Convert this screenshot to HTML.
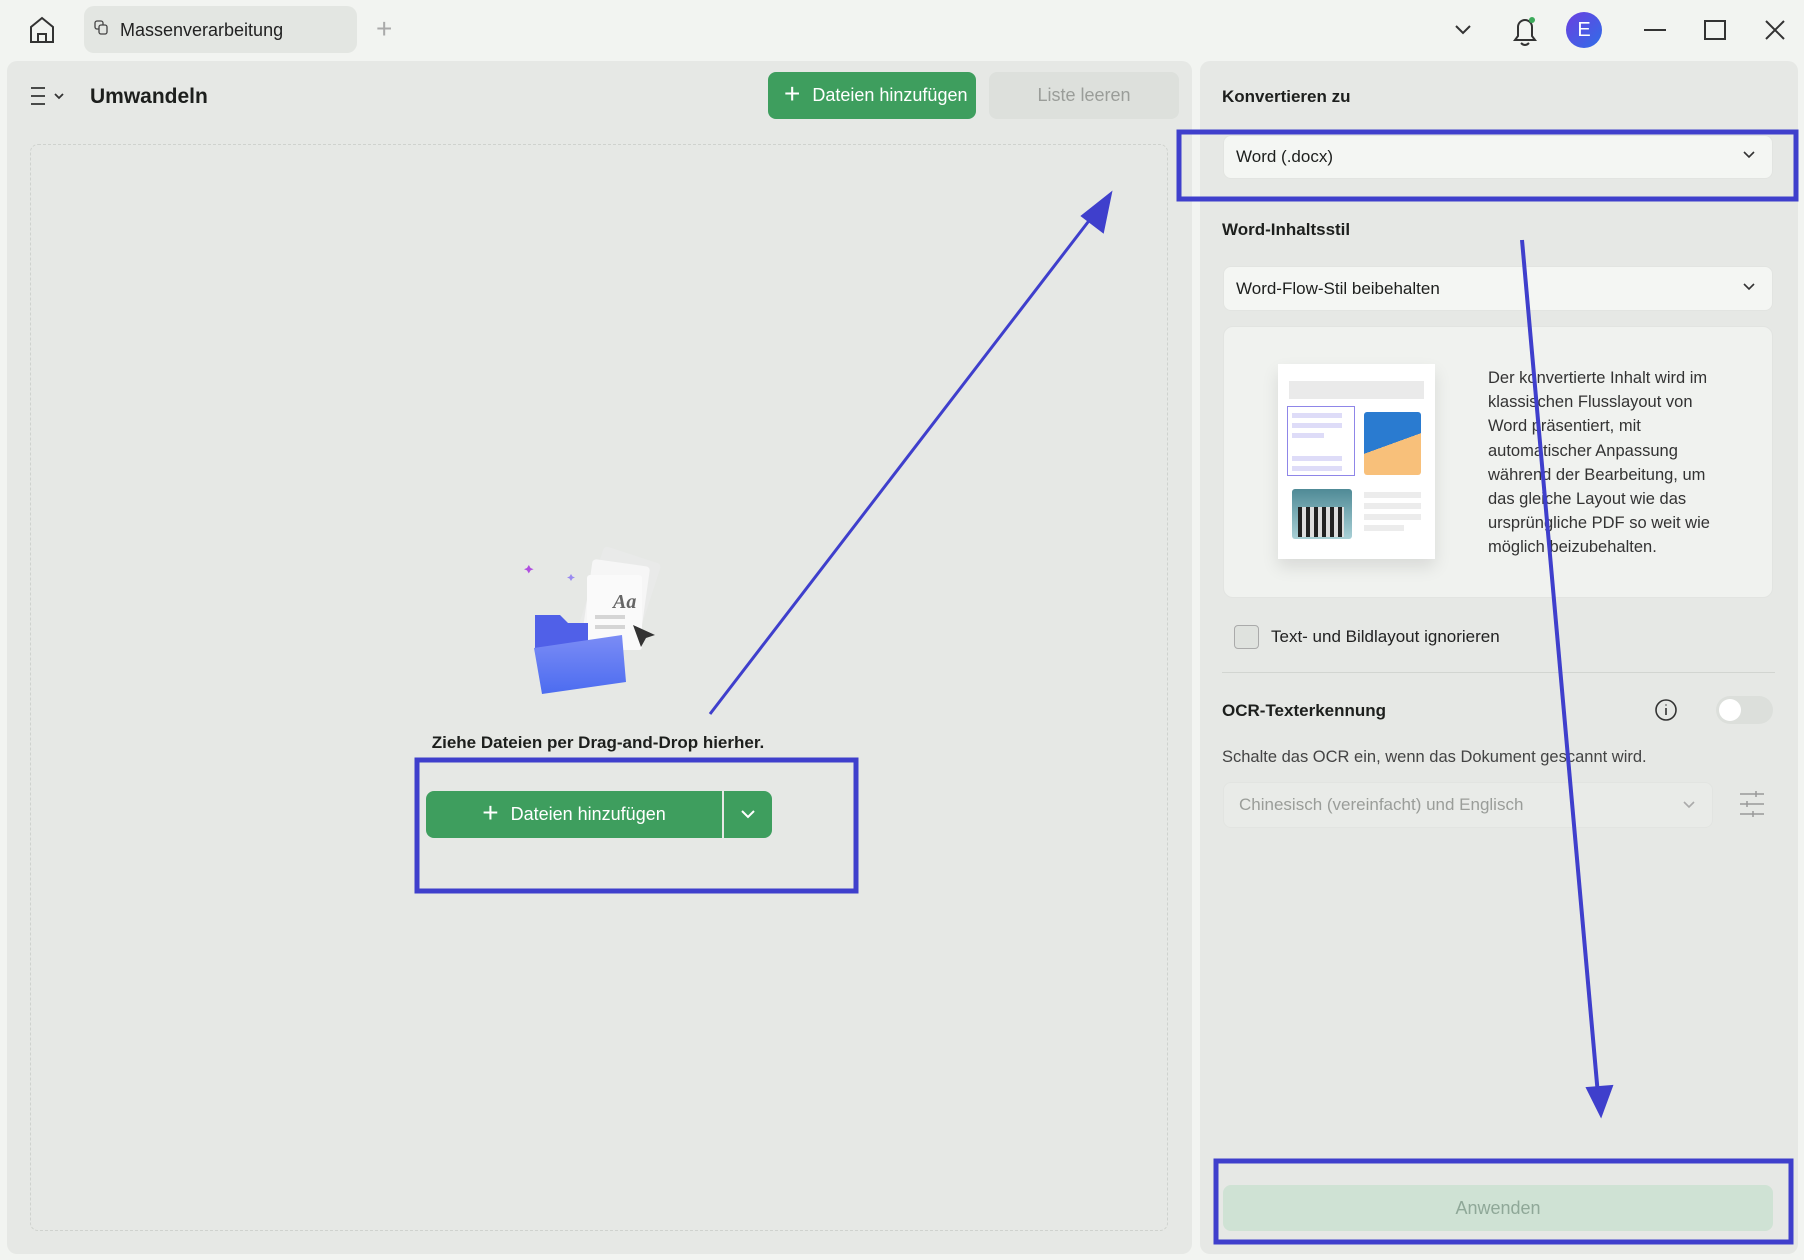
<!DOCTYPE html>
<html><head><meta charset="utf-8"><style>
*{box-sizing:border-box;margin:0;padding:0}
body{width:1804px;height:1260px;background:#f2f4f1;font-family:"Liberation Sans",sans-serif;position:relative;overflow:hidden;color:#1d1f1d}
.a{position:absolute}
.panel{background:#e6e8e5;border-radius:10px}
.sel{background:#f4f6f3;border-radius:8px;border:1px solid #e2e4e1;font-size:17px;padding-left:12px;display:flex;align-items:center}
.h{font-weight:bold;font-size:17px}
</style></head><body>
<svg class="a" style="left:27px;top:15px" width="30" height="30" viewBox="0 0 30 30" fill="none" stroke="#333" stroke-width="2"><path d="M4 27V12L15 3l11 9v15z"/><path d="M11 27v-8h8v8"/></svg>
<div class="a" style="left:84px;top:6px;width:273px;height:47px;background:#e3e6e2;border-radius:10px"></div>
<svg class="a" style="left:94px;top:20px" width="16" height="16" viewBox="0 0 16 16" fill="none" stroke="#444" stroke-width="1.3"><rect x="1" y="1" width="8" height="8" rx="2"/><rect x="5" y="5" width="8" height="9" rx="2" fill="#e3e6e2"/></svg>
<div class="a" style="left:120px;top:20px;font-size:18px;color:#222">Massenverarbeitung</div>
<div class="a" style="left:376px;top:13px;font-size:28px;color:#aaa;font-weight:300">+</div>
<svg class="a" style="left:1453px;top:22px" width="20" height="14"><path d="M3 4l7 7 7-7" fill="none" stroke="#333" stroke-width="2"/></svg>
<svg class="a" style="left:1510px;top:14px" width="30" height="34" fill="none" stroke="#333" stroke-width="2"><path d="M5 26h20l-3-4V13a7 7 0 0 0-14 0v9z"/><path d="M11 29q4 4 8 0"/><circle cx="22" cy="6" r="3" fill="#3caa5a" stroke="none"/></svg>
<div class="a" style="left:1566px;top:12px;width:36px;height:36px;border-radius:50%;background:linear-gradient(135deg,#6b3fe0,#2f6ee8);color:#fff;font-size:20px;text-align:center;line-height:36px">E</div>
<div class="a" style="left:1644px;top:29px;width:22px;height:2px;background:#333"></div>
<div class="a" style="left:1704px;top:20px;width:22px;height:20px;border:2px solid #333"></div>
<svg class="a" style="left:1764px;top:19px" width="22" height="22"><path d="M2 2l18 18M20 2L2 20" stroke="#333" stroke-width="2"/></svg>

<div class="a panel" style="left:7px;top:61px;width:1185px;height:1193px"></div>
<svg class="a" style="left:30px;top:86px" width="40" height="20" fill="none" stroke="#333" stroke-width="1.8"><path d="M1 2h14M1 10h14M1 18h14"/><path d="M25 8l4 4 4-4"/></svg>
<div class="a" style="left:90px;top:85px;font-size:21px;font-weight:bold">Umwandeln</div>
<div class="a" style="left:768px;top:72px;width:208px;height:47px;background:#3e9e5e;border-radius:8px;color:#fff;font-size:18px;display:flex;align-items:center;padding-left:16px"><span style="font-size:28px;font-weight:300;margin-right:12px;margin-top:-4px">+</span>Dateien hinzufügen</div>
<div class="a" style="left:989px;top:72px;width:190px;height:47px;background:#dde0dc;border-radius:8px;color:#9a9d99;font-size:18px;text-align:center;line-height:47px">Liste leeren</div>
<div class="a" style="left:30px;top:144px;width:1138px;height:1087px;border:1.5px dashed #cfd2ce;border-radius:8px"></div>
<svg class="a" style="left:520px;top:545px" width="165" height="150" viewBox="0 0 165 150">
<path d="M8 0l3 5 5 2-5 2-3 5-3-5-5-2 5-2z" transform="translate(4,20) scale(.6)" fill="#b04fe0"/>
<path d="M8 0l3 5 5 2-5 2-3 5-3-5-5-2 5-2z" transform="translate(47,29) scale(.5)" fill="#9a8af0"/>
<rect x="70" y="8" width="60" height="85" rx="4" fill="#e9eae9" transform="rotate(18 100 50)"/>
<rect x="68" y="18" width="58" height="80" rx="4" fill="#f6f6f6" transform="rotate(8 100 50)"/>
<rect x="67" y="30" width="55" height="75" rx="3" fill="#fafafa"/>
<text x="93" y="63" font-size="20" font-style="italic" font-weight="bold" fill="#666" font-family="Liberation Serif">Aa</text>
<rect x="75" y="70" width="30" height="4" fill="#d5d5d5"/><rect x="75" y="80" width="30" height="4" fill="#d5d5d5"/>
<path d="M113 80l22 10-9 3-5 9z" fill="#333"/>
<path d="M15 70h25l8 8h20v30H15z" fill="#5060e8"/>
<path d="M14 103l88-13 4 47-84 12z" fill="url(#g)"/>
<defs><linearGradient id="g" x1="0" y1="0" x2="0" y2="1"><stop offset="0" stop-color="#7b8cf5"/><stop offset="1" stop-color="#4c6cf0"/></linearGradient></defs>
</svg>
<div class="a" style="left:398px;top:733px;width:400px;text-align:center;font-size:17px;font-weight:bold">Ziehe Dateien per Drag-and-Drop hierher.</div>
<div class="a" style="left:426px;top:791px;width:346px;height:47px;background:#3e9e5e;border-radius:8px"></div>
<div class="a" style="left:722px;top:791px;width:2px;height:47px;background:#e6e8e5"></div>
<div class="a" style="left:426px;top:791px;width:296px;height:47px;color:#fff;font-size:18px;display:flex;align-items:center;justify-content:center"><span style="font-size:28px;font-weight:300;margin-right:12px;margin-top:-4px">+</span>Dateien hinzufügen</div>
<svg class="a" style="left:738px;top:806px" width="20" height="16"><path d="M4 5l6 6 6-6" fill="none" stroke="#fff" stroke-width="2"/></svg>

<div class="a panel" style="left:1200px;top:61px;width:598px;height:1193px"></div>
<div class="a h" style="left:1222px;top:87px">Konvertieren zu</div>
<div class="a sel" style="left:1223px;top:135px;width:550px;height:44px">Word (.docx)</div>
<svg class="a" style="left:1741px;top:148px" width="16" height="14"><path d="M3 4l5 5 5-5" fill="none" stroke="#333" stroke-width="1.6"/></svg>
<div class="a h" style="left:1222px;top:220px">Word-Inhaltsstil</div>
<div class="a sel" style="left:1223px;top:266px;width:550px;height:45px">Word-Flow-Stil beibehalten</div>
<svg class="a" style="left:1741px;top:280px" width="16" height="14"><path d="M3 4l5 5 5-5" fill="none" stroke="#333" stroke-width="1.6"/></svg>
<div class="a" style="left:1223px;top:326px;width:550px;height:272px;background:#f0f2ef;border-radius:10px;border:1px solid #e2e4e1"></div>
<div class="a" style="left:1278px;top:364px;width:157px;height:195px;background:#fff;box-shadow:0 8px 16px rgba(0,0,0,.1)"></div>
<div class="a" style="left:1289px;top:381px;width:135px;height:18px;background:#eaeaea"></div>
<div class="a" style="left:1287px;top:406px;width:68px;height:70px;border:1.5px solid #8f86e8"></div>
<div class="a" style="left:1292px;top:413px;width:50px;height:5px;background:#dedcf8"></div>
<div class="a" style="left:1292px;top:423px;width:50px;height:5px;background:#dedcf8"></div>
<div class="a" style="left:1292px;top:433px;width:32px;height:5px;background:#dedcf8"></div>
<div class="a" style="left:1292px;top:456px;width:50px;height:5px;background:#dedcf8"></div>
<div class="a" style="left:1292px;top:466px;width:50px;height:5px;background:#dedcf8"></div>
<div class="a" style="left:1364px;top:412px;width:57px;height:63px;border-radius:3px;background:linear-gradient(160deg,#2a7bd0 50%,#f8c07a 50%)"></div>
<div class="a" style="left:1292px;top:489px;width:60px;height:50px;border-radius:3px;background:linear-gradient(#4f8a96,#a9d0d6)"></div>
<div class="a" style="left:1298px;top:507px;width:46px;height:30px;background:repeating-linear-gradient(90deg,#222 0 4px,#ddd 4px 8px)"></div>
<div class="a" style="left:1364px;top:492px;width:57px;height:6px;background:#ececec"></div>
<div class="a" style="left:1364px;top:503px;width:57px;height:6px;background:#ececec"></div>
<div class="a" style="left:1364px;top:514px;width:57px;height:6px;background:#ececec"></div>
<div class="a" style="left:1364px;top:525px;width:40px;height:6px;background:#ececec"></div>
<div class="a" style="left:1488px;top:366px;white-space:nowrap;font-size:16.5px;line-height:24.2px;color:#333">Der konvertierte Inhalt wird im<br>klassischen Flusslayout von<br>Word präsentiert, mit<br>automatischer Anpassung<br>während der Bearbeitung, um<br>das gleiche Layout wie das<br>ursprüngliche PDF so weit wie<br>möglich beizubehalten.</div>
<div class="a" style="left:1234px;top:625px;width:25px;height:24px;border:1.5px solid #aaa;border-radius:4px;background:#dfe2de"></div>
<div class="a" style="left:1271px;top:627px;font-size:17px;color:#222">Text- und Bildlayout ignorieren</div>
<div class="a" style="left:1222px;top:672px;width:553px;height:1px;background:#d2d5d1"></div>
<div class="a h" style="left:1222px;top:701px">OCR-Texterkennung</div>
<svg class="a" style="left:1654px;top:698px" width="24" height="24" fill="none" stroke="#333" stroke-width="1.6"><circle cx="12" cy="12" r="10"/><path d="M12 10v7M12 6.5v1"/></svg>
<div class="a" style="left:1716px;top:696px;width:57px;height:28px;border-radius:14px;background:#dcdfdb"></div>
<div class="a" style="left:1719px;top:699px;width:22px;height:22px;border-radius:50%;background:#fff"></div>
<div class="a" style="left:1222px;top:748px;font-size:16.5px;color:#444">Schalte das OCR ein, wenn das Dokument gescannt wird.</div>
<div class="a sel" style="left:1223px;top:782px;width:490px;height:46px;color:#9a9d99;background:#e9ebe8;padding-left:15px">Chinesisch (vereinfacht) und Englisch</div>
<svg class="a" style="left:1681px;top:798px" width="16" height="14"><path d="M3 4l5 5 5-5" fill="none" stroke="#aaa" stroke-width="1.6"/></svg>
<svg class="a" style="left:1739px;top:790px" width="26" height="30" fill="none" stroke="#999" stroke-width="1.5"><path d="M1 4h24M1 14h24M1 24h24"/><path d="M17 1v6M8 11v6M14 21v6"/></svg>
<div class="a" style="left:1223px;top:1185px;width:550px;height:46px;background:#cfe2d4;border-radius:8px;color:#8fa898;font-size:18px;text-align:center;line-height:46px">Anwenden</div>

<svg class="a" style="left:0;top:0" width="1804" height="1260" fill="none" stroke="#3f3fcc">
<rect x="417" y="760" width="439" height="131" stroke-width="5"/>
<rect x="1179" y="132" width="617" height="67" stroke-width="5"/>
<rect x="1216" y="1161" width="575" height="81" stroke-width="5"/>
<path d="M710 714L1098 209" stroke-width="3"/>
<path d="M1111 193L1082 216L1103 232z" fill="#3f3fcc" stroke-width="2"/>
<path d="M1522 240L1598 1095" stroke-width="4"/>
<path d="M1601 1116L1587 1088L1612 1086z" fill="#3f3fcc" stroke-width="2"/>
</svg>
</body></html>
